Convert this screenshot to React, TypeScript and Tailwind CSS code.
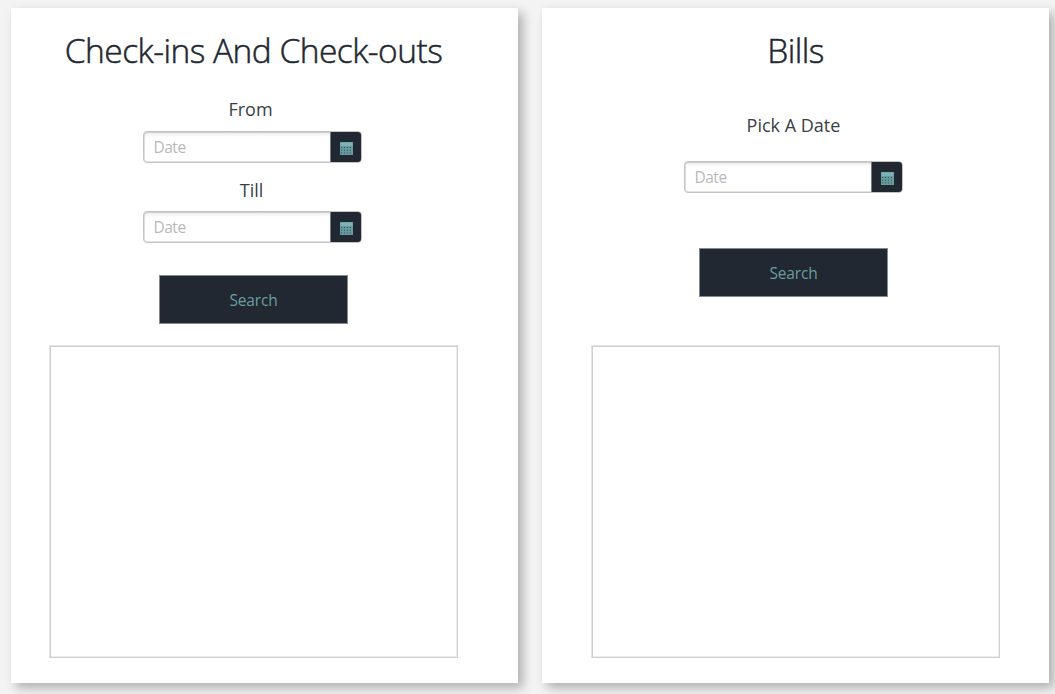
import type { ReactNode } from "react";

function CalendarIcon() {
  return (
    <svg width="13" height="13" viewBox="0 0 13 13" aria-hidden="true">
      <rect width="13" height="13" rx="0.5" fill="#689da0" />
      <rect x="0.5" y="0.5" width="12" height="3.5" fill="#7bb3b5" />
      <path d="M1 5.5H12M1 8.2H12M1 10.9H12" stroke="#35545c" strokeWidth="1" strokeDasharray="1.2 1.7" />
    </svg>
  );
}

function DateField() {
  return (
    <div className="flex h-8 w-[219px] shrink-0 overflow-hidden rounded-[4px] border border-[#c4c4c4] bg-white shadow-[inset_0_0_0_1px_#e4e4e4]">
      <input
        className="min-w-0 flex-1 pt-px pr-[9px] pl-[9.5px] text-[15.5px] tracking-[-0.5px] text-gray-700 shadow-[inset_0_3px_4px_-2px_rgba(0,0,0,0.16)] outline-none placeholder:text-[#b9b9b9]"
        placeholder="Date"
      />
      <button className="flex w-[31px] items-center justify-center border-l border-[#777c81] bg-[#222831] pt-0.5" aria-label="Open calendar">
        <CalendarIcon />
      </button>
    </div>
  );
}

function SearchButton() {
  return (
    <button className="h-[49px] w-[189px] shrink-0 border border-[#858a8f] bg-[#222831] pt-0.5 text-[15.5px] tracking-[-0.18px] text-[#6b9da0]">
      Search
    </button>
  );
}

function Card({ children }: { children: ReactNode }) {
  return (
    <section className="h-[675px] w-[507px] shrink-0 bg-white shadow-[5px_5px_10px_rgba(0,0,0,0.28)]">
      {children}
    </section>
  );
}

function Title({ children }: { children: ReactNode }) {
  return (
    <h1 className="h-11 whitespace-nowrap text-[33.5px] leading-[44px] font-light tracking-[-0.53px] text-[#222831] [-webkit-text-stroke:0.5px_#222831]">
      {children}
    </h1>
  );
}

function Label({ children }: { children: ReactNode }) {
  return <h2 className="h-6 text-[18px] leading-6 tracking-[0px] text-[#393e46]">{children}</h2>;
}

function Results() {
  return (
    <div className="h-[313px] w-[409px] border border-t-[#e4e4e4] border-r-[#d2d2d2] border-b-[#d2d2d2] border-l-[#e4e4e4] bg-white shadow-[inset_1px_1px_0_#cfcfcf,inset_-1px_-1px_0_#ececec]" />
  );
}

export default function App() {
  return (
    <main className="flex h-[694px] w-[1055px] gap-6 overflow-hidden bg-[#f3f3f3] pt-2 pl-[11px] font-['Open_Sans','Noto_Sans',sans-serif]">
      <Card>
        <div className="ml-[38px] flex w-[409px] flex-col items-center pt-5">
          <Title>Check-ins And Check-outs</Title>
          <div className="mt-[25px] mr-[6px]"><Label>From</Label></div>
          <div className="mt-[10px] mr-[2px]"><DateField /></div>
          <div className="mt-[15px] mr-[4px]"><Label>Till</Label></div>
          <div className="mt-[9px] mr-[2px]"><DateField /></div>
          <div className="mt-8"><SearchButton /></div>
          <div className="mt-[21px]"><Results /></div>
        </div>
      </Card>
      <Card>
        <div className="ml-[49px] flex w-[409px] flex-col items-center pt-5">
          <Title>Bills</Title>
          <div className="mt-[41px] mr-[4px]"><Label>Pick A Date</Label></div>
          <div className="mt-6 mr-[4px]"><DateField /></div>
          <div className="mt-[55px] mr-[4px]"><SearchButton /></div>
          <div className="mt-12"><Results /></div>
        </div>
      </Card>
    </main>
  );
}
